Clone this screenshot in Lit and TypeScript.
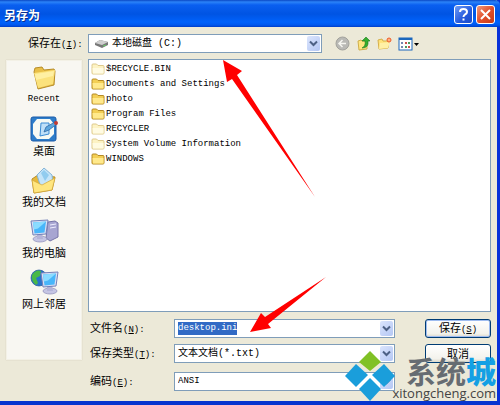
import { LitElement, html, svg, css } from "lit";
import { customElement, query } from "lit/decorators.js";

const folder = (pale = false) => html`<svg class="folder" width="14" height="12" viewBox="0 0 14 12">
  <path d="M1 3.500V2Q1 1 2 1h3.500l1.500 1.500h5q1 0 1 1V10q0 1-1 1H2q-1 0-1-1z"
    fill=${pale ? "#fdf3c4" : "#f3cf55"} stroke=${pale ? "#ddc98c" : "#b48a26"} />
  <path d="M1.500 5h11v5.500H2z" fill=${pale ? "#fffbe2" : "#ffe98c"} />
</svg>`;

const chevron = html`<svg width="9" height="7" viewBox="0 0 9 7"><path d="M1 1.500l3.500 3.500L8 1.500" fill="none" stroke="#4d6185" stroke-width="2"/></svg>`;

const monitor = (x: number, y: number) => svg`<g transform=${`translate(${x} ${y})`}>
  <ellipse cx="10" cy="20" rx="7" ry="3" fill="#c5c5e4" stroke="#8d8db8" stroke-width=".7"/>
  <path d="M7 14h5l1 6H7z" fill="#b4b4d8"/>
  <path d="M1 2l17-1-2 14-13 1z" fill="#d8def4" stroke="#7481b8"/>
  <path d="M3 3.500l13-1-1.500 11-10 1z" fill="#48b6fa"/>
  <path d="M3 3.500l13-1-8 7-4 1z" fill="#8bdcff"/></g>`;

const places = [
  { name: "Recent", latin: true, icon: svg`
    <path d="M4 8l1-4 7-1 2 3 10-1 1 2-1 14-16 4z" fill="#e9bf48" stroke="#b78d29"/>
    <path d="M4 9l21-3-2 14-15 4z" fill="#fbe27c"/><path d="M5 10l19-3-1 5-17 4z" fill="#fff0a3"/>` },
  { name: "桌面", latin: false, icon: svg`
    <rect x="1" y="2" width="25" height="24" rx="2" fill="#2d7dca" stroke="#1b5ba8"/>
    <path d="M7 4h13l4 5v10l-5 5H7l-4-5V9z" fill="#f7faf4"/>
    <path d="M11 8h8v11l-9 2z" fill="#bfe0f8" stroke="#3a8bd4"/>
    <path d="M14 17l2-5 9-5 2 2-8 6z" fill="#5ca6dd" stroke="#245e9e" stroke-width=".7"/>
    <circle cx="26" cy="8" r="2" fill="#c23b32"/>` },
  { name: "我的文档", latin: false, icon: svg`
    <path d="M2 13l6-4 17 2-3 13-18 3z" fill="#e6b93c" stroke="#b78d29"/>
    <path d="M7 9l7-7 8 7 1 9-12 4z" fill="#c5e5f9" stroke="#86b5d8"/>
    <path d="M11 7l3-3 5 5-4 6z" fill="#91ccef"/>
    <path d="M2 14l10 5 13-7-3 12-18 3z" fill="#ffe680" stroke="#d2a636" stroke-width=".7"/>` },
  { name: "我的电脑", latin: false, icon: svg`
    <path d="M18 5l7-1 3 2v14l-8 4-4-3z" fill="#a7a5d1" stroke="#7775a8"/>
    <path d="M20 8l6-1M20 11l6-1" stroke="#eeeeff"/>${monitor(0, 2)}` },
  { name: "网上邻居", latin: false, icon: svg`
    <circle cx="9" cy="10" r="8" fill="#2874ca" stroke="#245798" stroke-width=".7"/>
    <path d="M2 7q4-6 9-4l-1 5-4 2 2 5-2 2Q1 13 2 7z" fill="#49b947"/>${monitor(10, 3)}` },
];

const files: [string, boolean][] = [
  ["$RECYCLE.BIN", true], ["Documents and Settings", false], ["photo", false],
  ["Program Files", false], ["RECYCLER", true],
  ["System Volume Information", true], ["WINDOWS", false],
];

@customElement("app-root")
export class AppRoot extends LitElement {
  static styles = css`
    :host { display: block; position: relative; overflow: hidden; color: #000;
      font: 11px/14px "Noto Sans CJK SC", sans-serif; }
    * { box-sizing: border-box; }
    svg { display: block; flex: none; }
    button, input, select { font: inherit; color: inherit; margin: 0; padding: 0; border: 0; background: none; }
    .en { font: 9px/14px "Liberation Mono", "Noto Sans CJK SC", monospace; }
    .window { min-height: 100vh; background: #ece9d8; border-right: 3px solid #0831d9; border-bottom: 4px solid #0734cf; }
    .title { height: 27px; margin-right: -3px; padding: 2px 5px 0 4px; display: flex; align-items: center; gap: 3px;
      background: linear-gradient(#0a48c4, #2b83f8 2px, #0a5ff0 5px, #0054e3 14px, #0062fc 22px, #0058ee 25px, #003dc8);
      border-top-right-radius: 5px; color: #fff; }
    h1 { font: bold 12px/16px "Noto Sans CJK SC", sans-serif; margin: 0; flex: 1; text-shadow: 1px 1px #0a2f8c; }
    .cap { width: 19px; height: 19px; border: 1px solid #fff; border-radius: 3px; display: grid; place-items: center;
      background: linear-gradient(135deg, #6d9bf6, #2459dc 60%, #1c4cc8); }
    .close { background: linear-gradient(135deg, #f09a7c, #e2502c 50%, #c63a15); }
    .look { display: flex; align-items: center; padding: 7px 6px 6px; }
    .look label { width: 82px; padding-left: 22px; white-space: nowrap; }
    .combo { position: relative; height: 19px; flex: 1; min-width: 0; display: flex; align-items: center;
      background: #fff; border: 1px solid #7f9db9; }
    .combo select, .combo input { appearance: none; width: 100%; height: 17px; padding-left: 3px; outline: none; }
    .combo select { font: 10px/17px "Liberation Mono", "Noto Sans CJK SC", monospace; }
    .combo input { height: 13px; line-height: 13px; }
    .combo .code { font-size: 9px; }
    .combo input::selection { background: #316ac5; color: #fff; }
    .drive { padding-left: 5px; }
    .drop { position: absolute; right: 1px; top: 1px; bottom: 1px; width: 13px; display: grid; place-items: center;
      background: linear-gradient(135deg, #dbe5fd, #b4c7f4); border-radius: 2px; pointer-events: none; }
    .tools { width: 169px; padding-left: 13px; display: flex; align-items: center; gap: 6px; }
    .body { display: grid; grid-template-columns: 76px minmax(0, 1fr); gap: 6px; padding: 0 6px; }
    .places { height: 300px; margin-top: 1px; background: #f8f7f2; border: 1px solid #f3f1e6; box-shadow: 0 0 1px #c9c5b2;
      padding-top: 3px; display: flex; flex-direction: column; }
    .place { height: 51px; display: flex; flex-direction: column; align-items: center; }
    .place span { line-height: 12px; }
    .files { height: 253px; margin: 0; padding: 1px 2px; list-style: none; background: #fff; border: 1px solid #7f9db9; }
    .files li { height: 15px; display: flex; align-items: center; gap: 1px; }
    .fields { display: grid; grid-template-columns: 86px minmax(0, 1fr) 66px; column-gap: 30px; padding-top: 7px; row-gap: 6px; align-items: center; }
    .field { grid-column: 1 / 3; display: flex; align-items: center; }
    .field label { width: 86px; padding-left: 2px; white-space: nowrap; }
    .coding { margin-top: 3px; }
    .push { height: 19px; padding-bottom: 2px; border: 1px solid #003c74; border-radius: 3px; background: linear-gradient(#fff, #f3f2ec 80%, #dcd8ca); }
    .save { box-shadow: inset 0 0 0 1px #9fbcf0; }
    .arrows { position: absolute; left: 0; top: 0; pointer-events: none; }
    .mark { position: absolute; right: 4px; bottom: 3px; display: flex; align-items: flex-end; pointer-events: none; }
    .words { display: flex; flex-direction: column; align-items: flex-end; margin-left: -4px; }
    .cn { font: bold 30px/28px "Noto Sans CJK SC", sans-serif; color: #666c72; }
    .cn b { color: #14a0e4; }
    .site { font: 13px/18px "Open Sans", sans-serif; color: #444; }
  `;

  @query("input") private nameBox!: HTMLInputElement;

  firstUpdated() {
    this.nameBox.focus();
    this.nameBox.select();
  }

  render() {
    return html`
      <main class="window">
        <header class="title">
          <h1>另存为</h1>
          <button class="cap" aria-label="帮助"><svg width="11" height="13" viewBox="0 0 11 13"><path d="M2 4Q2 1 5.500 1T9 4q0 1.500-2 2.500-1.500 1-1.500 2.500" fill="none" stroke="#fff" stroke-width="2"/><path d="M4.500 10.500h2v2h-2z" fill="#fff"/></svg></button>
          <button class="cap close" aria-label="关闭"><svg width="11" height="11" viewBox="0 0 11 11"><path d="M1 1l9 9M10 1l-9 9" stroke="#fff" stroke-width="2"/></svg></button>
        </header>
        <div class="look">
          <label for="where">保存在<span class="en">(<u>I</u>):</span></label>
          <div class="combo drive">
            <svg width="15" height="10" viewBox="0 0 15 10"><path d="M1 4l5-3 8 2v3L8 9 1 6z" fill="#777"/><path d="M1 4l5-3 8 2-6 3z" fill="#cfcfcf"/><path d="M9 7l3-1" stroke="#6c6"/></svg>
            <select id="where"><option>本地磁盘 (C:)</option></select>
            <span class="drop">${chevron}</span>
          </div>
          <nav class="tools">
            <button aria-label="后退"><svg width="15" height="15" viewBox="0 0 15 15"><circle cx="7.500" cy="7.500" r="6.500" fill="#b9b9b5" stroke="#a2a29c"/><path d="M11 7.500H4.500M7.500 4l-3.500 3.500 3.500 3.500" fill="none" stroke="#f5f5f0" stroke-width="1.500"/></svg></button>
            <button aria-label="向上一级"><svg width="15" height="15" viewBox="0 0 15 15"><path d="M2 5l3-1 1 1h5v8l-8 1z" fill="#ffe680" stroke="#cfae4a"/><path d="M6 12q4-2 3-7H6l4-4 4 4h-2q1 7-6 7z" fill="#35ad2e" stroke="#1c7d1c" stroke-width=".6"/></svg></button>
            <button aria-label="新建文件夹"><svg width="15" height="15" viewBox="0 0 15 15"><path d="M1 4l4-1 1 2h6l-1 7-9 1z" fill="#ffe27a" stroke="#d6b04a"/><path d="M3 7l10-1-2 6-9 1z" fill="#fff0a6"/><circle cx="12" cy="4" r="2" fill="#ffb080" stroke="#ee5b28"/></svg></button>
            <button aria-label="查看"><svg width="21" height="14" viewBox="0 0 21 14"><rect x="1" y="1" width="13" height="12" fill="#fff" stroke="#1b67bd"/><path d="M1 2h13" stroke="#1b67bd" stroke-width="2"/><path d="M3 6h2M3 10h2" stroke="#7487b0" stroke-width="2"/><path d="M7 6h2M10 10h2" stroke="#c8504c" stroke-width="2"/><path d="M10 6h2M7 10h2" stroke="#4b9b5c" stroke-width="2"/><path d="M16 6h5l-2.500 3z" fill="#000"/></svg></button>
          </nav>
        </div>
        <div class="body">
          <nav class="places">
            ${places.map(p => html`<button class="place"><svg width="29" height="29" viewBox="0 0 29 29">${p.icon}</svg><span class=${p.latin ? "en" : ""}>${p.name}</span></button>`)}
          </nav>
          <section>
            <ul class="files">${files.map(([n, pale]) => html`<li>${folder(pale)}<span class="en">${n}</span></li>`)}</ul>
            <div class="fields">
              <div class="field"><label for="name">文件名<span class="en">(<u>N</u>):</span></label>
                <div class="combo"><input id="name" class="en" value="desktop.ini"><span class="drop">${chevron}</span></div></div>
              <button class="push save">保存<span class="en">(<u>S</u>)</span></button>
              <div class="field"><label for="type">保存类型<span class="en">(<u>T</u>):</span></label>
                <div class="combo"><select id="type"><option>文本文档(*.txt)</option></select><span class="drop">${chevron}</span></div></div>
              <button class="push">取消</button>
              <div class="field coding"><label for="code">编码<span class="en">(<u>E</u>):</span></label>
                <div class="combo"><select id="code" class="code"><option>ANSI</option></select><span class="drop">${chevron}</span></div></div>
            </div>
          </section>
        </div>
      </main>
      <svg class="arrows" width="330" height="340" viewBox="0 0 330 340">
        <path d="M223 60L242 71 237 75 315 197 232 79 227 82z" fill="#f00"/>
        <path d="M250 332L261 313 265 317 326 277 268 324 271 328z" fill="#f00"/>
      </svg>
      <div class="mark">
        <svg class="logo" width="52" height="52" viewBox="0 0 52 52"><path d="M26 1l11 11-11 9-11-9z" fill="#80c125"/><path d="M12 14l12 11-12 12L1 26z" fill="#1a9edb"/><path d="M40 14l11 12-11 11-12-12z" fill="#1a9edb"/><path d="M26 28l11 11-11 12-11-12z" fill="#1a9edb"/></svg>
        <div class="words"><span class="cn">系统<b>城</b></span><span class="site">xitongcheng.com</span></div>
      </div>`;
  }
}
